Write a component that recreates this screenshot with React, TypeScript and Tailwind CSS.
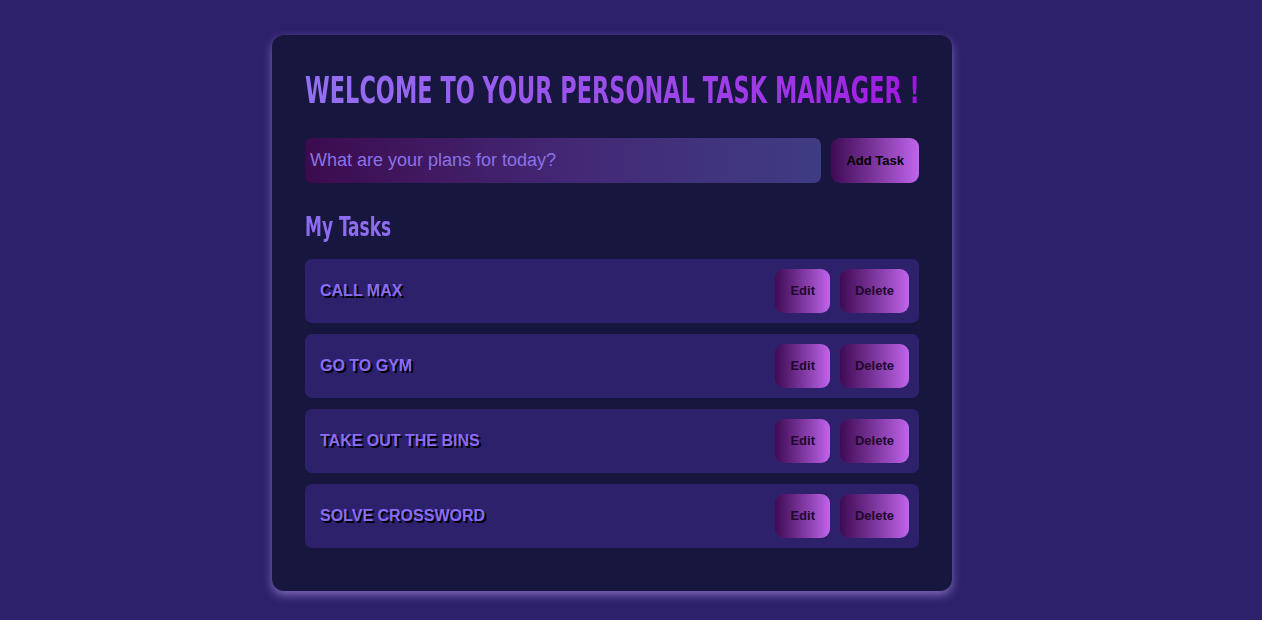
import React from 'react';

const tasks = ['Call Max', 'Go to gym', 'Take out the bins', 'Solve crossword'];

const btn =
    'px-[15px] rounded-[9px] bg-gradient-to-r from-[#3f0a55] to-[#c064ec] text-[13px] font-bold font-["Liberation_Sans",Arial,sans-serif]';

const App: React.FC = () => {
    return (
        <div className="min-h-screen bg-[#2e216b] pt-[35px] pb-[28px]">
            {/* Card */}
            <div className="ml-[272px] w-[680px] rounded-[12px] bg-[#17163e] px-[33px] pt-[36px] pb-[43px] shadow-[0_4px_10px_rgba(190,160,245,0.55)]">
                <h1 className="whitespace-nowrap h-[40px] leading-[40px] font-['DejaVu_Sans_Condensed',sans-serif] font-bold text-[37px]">
                    <span className="inline-block origin-left scale-x-[0.674] bg-gradient-to-r from-[#9270f2] to-[#a012e2] bg-clip-text text-transparent">
                        WELCOME TO YOUR PERSONAL TASK MANAGER !
                    </span>
                </h1>

                {/* New task form */}
                <form className="mt-[27px] flex gap-[10px]" onSubmit={(e) => e.preventDefault()}>
                    <input
                        type="text"
                        placeholder="What are your plans for today?"
                        className="h-[45px] flex-1 rounded-[7px] bg-gradient-to-r from-[#3c0a4e] via-[#432775] to-[#3e3c84] px-[5px] text-[18px] text-[#8a72e6] placeholder:text-[#8a72e6] outline-none font-['Liberation_Sans',Arial,sans-serif]"
                    />
                    <button type="submit" className={btn + ' h-[45px] text-black'}>
                        Add Task
                    </button>
                </form>

                <h2 className="mt-[28px] h-[32px] leading-[32px] font-['DejaVu_Sans_Condensed',sans-serif] font-bold text-[27px] text-[#8e6cf0]">
                    <span className="inline-block origin-left scale-x-[0.7]">My Tasks</span>
                </h2>

                {/* Task list */}
                <ul className="mt-[16px] flex flex-col gap-[11px]">
                    {tasks.map((t) => (
                        <li
                            key={t}
                            className="flex h-[64px] items-center justify-between rounded-[7px] bg-[#2e216b] pl-[15px] pr-[10px]"
                        >
                            <span className="uppercase font-bold text-[16px] text-[#8a6cf6] [text-shadow:2px_2px_0_#000] font-['Liberation_Sans',Arial,sans-serif]">
                                {t}
                            </span>
                            <div className="flex gap-[10px]">
                                <button className={btn + ' h-[44px] text-[#22082e]'}>Edit</button>
                                <button className={btn + ' h-[44px] text-[#22082e]'}>Delete</button>
                            </div>
                        </li>
                    ))}
                </ul>
            </div>
        </div>
    );
};

export default App;
